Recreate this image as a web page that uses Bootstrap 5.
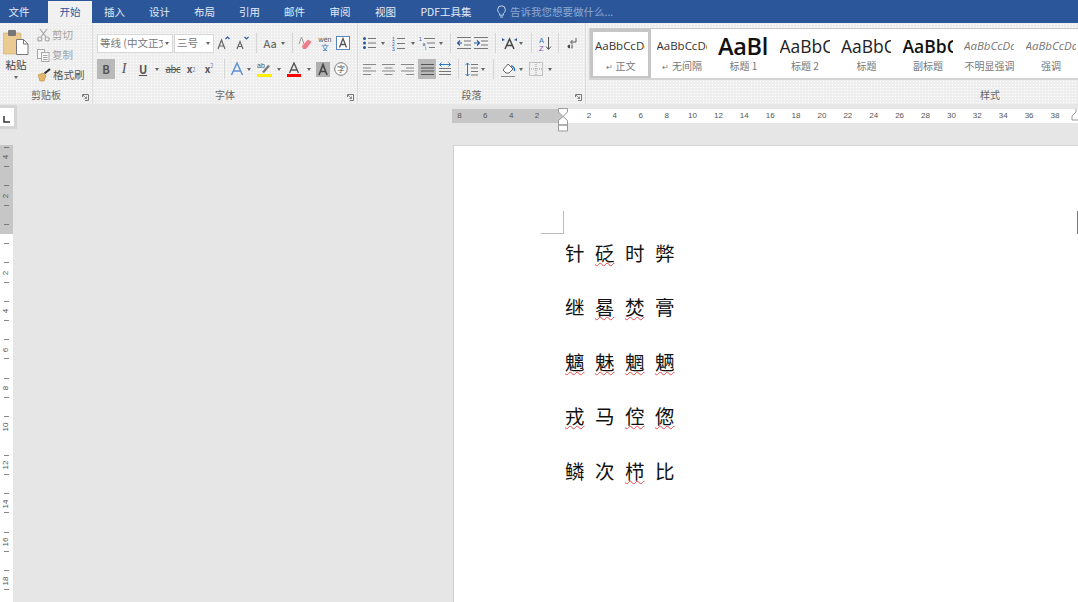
<!DOCTYPE html>
<html lang="zh-CN">
<head>
<meta charset="utf-8">
<title>Word</title>
<link rel="stylesheet" href="https://cdn.jsdelivr.net/npm/bootstrap@5.3.0/dist/css/bootstrap.min.css">
<style>
html,body{height:602px;overflow:hidden}
body{background:#e6e6e6;font-family:"Noto Sans CJK SC","Liberation Sans",sans-serif;color:#555;font-size:10px;line-height:14px}
svg{display:block;flex:none}
.tabbar{height:23px;background:#2b579a;color:#e4ebf5;font-size:10.5px;flex-wrap:nowrap}
.rtab{height:23px;display:flex;align-items:center;justify-content:center;flex:none;color:#e4ebf5;text-decoration:none}
.rtab.on{background:#f1f1f1;color:#2b579a;margin-left:10px;height:22px;margin-top:1px;width:44px}
.t38{width:38px}.t45{width:45px}.t46{width:46px}.t76{width:76px}
.tell{color:#8ea8d2;margin-left:13px;gap:4px;white-space:nowrap}
.ribbon{height:81px;background-color:#eeeeee;background-image:radial-gradient(#ffffff 0.7px,transparent 0.8px);background-size:3px 3px;color:#666;overflow:hidden}
.rgroup{height:81px;border-right:1px solid #dcdcdc;flex:none}
.gclip{width:93px}.gfont{width:265px}.gpara{width:228px}.gstyle{width:808px;border:0}
.glabel{height:15px;line-height:15px;margin-top:auto;margin-bottom:2px;text-align:center;color:#666;flex:none}
.lnch{position:absolute;right:3px;bottom:3px}
.tb{height:20px;flex:none;display:flex;align-items:center}
.tb+.tb{margin-top:6px}
.fontrows{padding:10px 0 0 4px}
.pararows{padding:10px 0 0 0}
.cl{height:20px;flex:none;display:flex;align-items:center;justify-content:center;color:#555;font-size:11px}
.w4{width:4px}.w6{width:6px}.w7{width:7px}.w8{width:8px}.w10{width:10px}.w12{width:12px}.w14{width:14px}.w16{width:16px}.w18{width:18px}.w19{width:19px}.w20{width:20px}.w22{width:22px}.w24{width:24px}.w28{width:28px}
.act{background:#b9b9b9}
.dn{width:0;height:0;border-left:2.5px solid transparent;border-right:2.5px solid transparent;border-top:3px solid #666;display:block;flex:none}
.vs{width:1px;height:20px;background:#d6d6d6;display:block}
.combo{height:19px;background:#fff;border:1px solid #d8d8d8;display:flex;align-items:center;flex:none;padding:0 3px 0 2px;color:#777;font-size:10.5px;white-space:nowrap;overflow:hidden}
.cf{width:76px;margin-right:1px}.cs{width:40px}
.combo .dn{margin-left:auto}
.fname{width:63px;overflow:hidden;display:block}
.itl{font-family:"Liberation Serif",serif;font-size:14px}
.strike{font-size:9.5px;letter-spacing:-.3px}
.xs{font-size:10px;font-weight:700}
.xs sub,.xs sup{font-size:5.5px;color:#5b86bd;font-weight:400}
.pastecol{width:32px;padding-top:7px}
.pastetx{line-height:14px;margin-top:3px;color:#444;font-size:10.5px}
.smallcol{padding-top:2px;margin-left:5px}
.sm{height:20px;display:flex;align-items:center;gap:2px;font-size:10.5px;white-space:nowrap}
.sm.off{color:#a3a3a3}
.sm.onn{color:#555}
.gallery{margin:5px 0 0 3px;height:52px;background:#fff;border-top:1px solid #c9c9c9;border-bottom:2px solid #d4d4d4;border-left:1px solid #d4d4d4}
.gitem{width:61.5px;height:50px;flex:none;padding:5px 0 0 5px;overflow:hidden;background:#fff}
.gitem.sel{box-shadow:inset 0 0 0 3px #c6c6c6;width:61px;margin-right:.5px}
.samp{height:23px;width:50px;overflow:hidden;white-space:nowrap;display:flex;align-items:center;font-family:"Open Sans","Liberation Sans",sans-serif;color:#333;font-size:11.5px}
.s-h1{font-size:23.5px;font-weight:600;color:#111;letter-spacing:-.3px}
.s-h2{font-size:17.5px;color:#222}
.s-sub{font-size:17.5px;font-weight:600;color:#111}
.s-em{font-style:italic;color:#777;font-size:11.5px}
.gname{width:51px;text-align:center;line-height:14px;margin-top:2px;color:#777;white-space:nowrap;font-size:10px}
.ret{font-size:8px;margin-right:3px;color:#777}
.work{height:498px}
.leftcol{width:452px;flex:none}
.corner{width:17px;height:24px;background:#fff;border:3px solid #d5d5d5;border-left:0;padding:8px 0 0 3px;margin-top:1px}
.vruler{width:13px;margin-top:16px;height:457px}
.vgrey{height:89px;background-color:#c6c6c6;background-image:repeating-linear-gradient(to top,transparent 0 9px,#777 9px 10px,transparent 10px 19.25px);background-size:5px 100%;background-position:4px 0;background-repeat:no-repeat;padding-bottom:19.25px}
.vwhite{height:368px;background-color:#fff;background-image:repeating-linear-gradient(to bottom,transparent 0 9px,#888 9px 10px,transparent 10px 19.25px);background-size:5px 100%;background-position:4px 0;background-repeat:no-repeat;padding-top:19.25px}
.vnum{height:38.5px;width:13px;flex:none;display:flex;align-items:center;justify-content:center;font-size:8px;color:#555;font-family:"Liberation Sans",sans-serif}
.vnum span{transform:rotate(-90deg);display:block;background:inherit}
.rightcol{min-width:0;flex:1 1 0}
.hruler{height:14px;margin-top:5px;font-family:"Liberation Sans",sans-serif;font-size:8px;line-height:14px;color:#555}
.hgrey{width:111px;background:#c6c6c6;padding-right:13px;flex:none}
.hwhite{flex:1 1 0;background:#fff;padding-left:13px;overflow:hidden}
.hnum{width:25.9px;flex:none;text-align:center}
.ind{position:absolute;left:106px;top:-1px}
.ind2{position:absolute;right:0;top:0}
.pagebox{height:460px;margin:22px 0 0 1px;background:#fff;border-left:1px solid #cfcfcf;border-top:1px solid #d6d6d6;padding:80px 0 0 111px}
.crop{position:absolute;left:87px;top:65px;width:23px;height:23px;border-right:1px solid #bbb;border-bottom:1px solid #bbb}
.crop2{position:absolute;right:0;top:65px;width:1px;height:23px;background:#777}
.hanzi{display:grid;grid-template-columns:repeat(4,30px);grid-auto-rows:54.4px;font-size:19.5px;line-height:54.4px;color:#111}
.hz{display:block;height:54.4px;text-align:left;white-space:nowrap}
.sq{text-decoration:underline wavy #e8484a 1px;text-underline-offset:1px}
</style>
</head>
<body>
<ul class="nav tabbar align-items-center">
  <li><a class="rtab t38" href="#">文件</a></li>
  <li><a class="rtab on" href="#">开始</a></li>
  <li><a class="rtab t45" href="#">插入</a></li>
  <li><a class="rtab t45" href="#">设计</a></li>
  <li><a class="rtab t45" href="#">布局</a></li>
  <li><a class="rtab t45" href="#">引用</a></li>
  <li><a class="rtab t45" href="#">邮件</a></li>
  <li><a class="rtab t46" href="#">审阅</a></li>
  <li><a class="rtab t45" href="#">视图</a></li>
  <li><a class="rtab t76" href="#">PDF工具集</a></li>
  <li class="d-flex align-items-center tell">
    <svg width="9" height="13" viewBox="0 0 9 13" fill="none" stroke="#c5d3e8"><path d="M2.6 8.5C1.5 7.5.7 6.5.7 4.6a3.8 3.8 0 0 1 7.6 0c0 1.9-.8 2.9-1.9 3.9v1.7H2.6z"/><path d="M3 12h3"/></svg>
    <span>告诉我您想要做什么...</span>
  </li>
</ul>

<div class="ribbon d-flex">
  <!-- clipboard -->
  <section class="rgroup gclip d-flex flex-column position-relative">
    <div class="d-flex">
      <div class="pastecol d-flex flex-column align-items-center">
        <svg width="26" height="25" viewBox="0 0 26 25"><rect x="0" y="3" width="18" height="21" rx="1" fill="#eccb93" stroke="#c9a76d" stroke-width=".6"/><rect x="5" y="0" width="8" height="6" rx="1" fill="#777"/><path d="M13.5 9.5h7l4.5 4.5v10.5h-11.500z" fill="#fff" stroke="#777"/><path d="M20.500 9.500v4.500h4.500" fill="none" stroke="#777"/></svg>
        <div class="pastetx">粘贴</div>
        <span class="dn mt-1"></span>
      </div>
      <div class="smallcol">
        <div class="sm off"><svg width="13" height="14" viewBox="0 0 13 14" fill="none" stroke="#a8a8a8" stroke-width="1.200"><path d="M3 1l6 8M10 1L4 9"/><circle cx="2.800" cy="11" r="2"/><circle cx="10.200" cy="11" r="2"/></svg><span>剪切</span></div>
        <div class="sm off"><svg width="13" height="14" viewBox="0 0 13 14" fill="#f6f6f6" stroke="#a8a8a8"><rect x=".5" y="1.500" width="7" height="9"/><rect x="4.500" y="4.500" width="7.500" height="9"/><path d="M6 7.500h4.500M6 9.500h4.500M6 11.500h4.500"/></svg><span>复制</span></div>
        <div class="sm onn"><svg width="14" height="14" viewBox="0 0 14 14"><path d="M1 7l5-2 3 3-2 5H3z" fill="#e2b768" stroke="#b58b3c" stroke-width=".6"/><path d="M7.500 5.500L13 1" stroke="#333" stroke-width="2.200"/></svg><span>格式刷</span></div>
      </div>
    </div>
    <div class="glabel">剪贴板</div>
    <svg class="lnch" width="7" height="7" viewBox="0 0 7 7" fill="none" stroke="#777"><path d="M.5 3V.5H6.500V6.500H3"/><path d="M1 1l3.500 3.500M2.500 4.500h2v-2" stroke-width=".8"/></svg>
  </section>

  <!-- font -->
  <section class="rgroup gfont d-flex flex-column position-relative">
    <div class="fontrows">
      <div class="tb">
        <div class="combo cf"><span class="fname">等线 (中文正文)</span><span class="dn"></span></div>
        <div class="combo cs"><span>三号</span><span class="dn"></span></div>
        <div class="cl w20"><svg width="14" height="14" viewBox="0 0 14 14" fill="none" stroke="#666" stroke-width="1.200"><path d="M1 13L4.500 4 8 13M2.200 10h4.600"/><path d="M8.500 3l2-2 2 2" stroke="#2b579a"/></svg></div>
        <div class="cl w18"><svg width="14" height="14" viewBox="0 0 14 14" fill="none" stroke="#666" stroke-width="1.200"><path d="M1 13L4 5.500 7 13M2 10.500h4"/><path d="M8.500 1l2 2 2-2" stroke="#2b579a"/></svg></div>
        <div class="cl w8"><span class="vs"></span></div>
        <div class="cl w28 gap-1"><span>Aa</span><span class="dn"></span></div>
        <div class="cl w8"><span class="vs"></span></div>
        <div class="cl w18"><svg width="14" height="14" viewBox="0 0 14 14"><path d="M1 8L3.500 1 6 8" fill="none" stroke="#999"/><path d="M4 10l6-6.500 3.500 2.500-5.500 7H5z" fill="#ef7c8a"/></svg></div>
        <div class="cl w22 flex-column"><svg width="18" height="16" viewBox="0 0 18 16"><text x="9" y="7" font-size="7" text-anchor="middle" fill="#555" font-family="Liberation Sans">wén</text><text x="9" y="15.500" font-size="8" text-anchor="middle" fill="#2b79c2" font-family="Noto Sans CJK SC">文</text></svg></div>
        <div class="cl w14"><svg width="14" height="14" viewBox="0 0 14 14"><rect x=".5" y=".5" width="13" height="13" fill="#fff" stroke="#5b86bd"/><path d="M3.500 11.500L7 2.500l3.500 9M4.800 8.500h4.400" fill="none" stroke="#555" stroke-width="1.300"/></svg></div>
      </div>
      <div class="tb">
        <div class="cl w18 act fw-bold">B</div>
        <div class="cl w18 fst-italic itl">I</div>
        <div class="cl w20"><span class="text-decoration-underline fw-semibold">U</span></div>
        <div class="cl w8"><span class="dn"></span></div>
        <div class="cl w24 strike"><span class="text-decoration-line-through">abc</span></div>
        <div class="cl w12 xs"><span>x</span><sub>2</sub></div>
        <div class="cl w24 xs"><span>x</span><sup>2</sup></div>
        <div class="cl w7"><span class="vs"></span></div>
        <div class="cl w18"><svg width="14" height="16" viewBox="0 0 14 16" fill="none" stroke="#5c8fcf" stroke-width="1.500"><path d="M1.500 14L7 2l5.500 12M3.500 10h7"/></svg></div>
        <div class="cl w6"><span class="dn"></span></div>
        <div class="cl w24"><svg width="15" height="15" viewBox="0 0 15 15"><text x="0" y="6" font-size="7" fill="#555" font-family="Liberation Sans">ab</text><path d="M5 10l6-7 2 1-6 7z" fill="#777"/><rect y="12" width="15" height="3" fill="#ffef00"/></svg></div>
        <div class="cl w6"><span class="dn"></span></div>
        <div class="cl w24"><svg width="14" height="15" viewBox="0 0 14 15"><path d="M2.500 11L7 1l4.500 10M4 8h6" fill="none" stroke="#555" stroke-width="1.400"/><rect y="12" width="14" height="3" fill="#f00"/></svg></div>
        <div class="cl w6"><span class="dn"></span></div>
        <div class="cl w22"><svg width="14" height="15" viewBox="0 0 14 15"><rect width="14" height="15" fill="#b0b0b0"/><path d="M3 13L7 2.500 11 13M4.500 9.500h5" fill="none" stroke="#444" stroke-width="1.600"/></svg></div>
        <div class="cl w14"><svg width="14" height="14" viewBox="0 0 14 14"><circle cx="7" cy="7" r="6.300" fill="#fff" stroke="#777"/><text x="7" y="10" font-size="8" text-anchor="middle" fill="#555" font-family="Noto Sans CJK SC">字</text></svg></div>
      </div>
    </div>
    <div class="glabel">字体</div>
    <svg class="lnch" width="7" height="7" viewBox="0 0 7 7" fill="none" stroke="#777"><path d="M.5 3V.5H6.500V6.500H3"/><path d="M1 1l3.500 3.500M2.500 4.500h2v-2" stroke-width=".8"/></svg>
  </section>

  <!-- paragraph -->
  <section class="rgroup gpara d-flex flex-column position-relative">
    <div class="pararows">
      <div class="tb">
        <div class="cl w22"><svg width="13" height="14" viewBox="0 0 13 14" fill="none" stroke="#777"><path d="M5 2.500h8M5 7h8M5 11.500h8"/><g fill="#2b579a" stroke="none"><circle cx="1.500" cy="2.500" r="1.500"/><circle cx="1.500" cy="7" r="1.500"/><circle cx="1.500" cy="11.500" r="1.500"/></g></svg></div>
        <div class="cl w6"><span class="dn"></span></div>
        <div class="cl w24"><svg width="13" height="15" viewBox="0 0 13 15"><path d="M5 2.500h8M5 7.500h8M5 12.500h8" stroke="#777"/><text x="0" y="5" font-size="5" fill="#2b579a" font-family="Liberation Sans">1</text><text x="0" y="10" font-size="5" fill="#2b579a" font-family="Liberation Sans">2</text><text x="0" y="15" font-size="5" fill="#2b579a" font-family="Liberation Sans">3</text></svg></div>
        <div class="cl w6"><span class="dn"></span></div>
        <div class="cl w22"><svg width="16" height="14" viewBox="0 0 16 14"><path d="M5 2.500h11M8 7h8M10 11.500h6" stroke="#777"/><text x="0" y="5" font-size="5" fill="#2b579a" font-family="Liberation Sans">1</text><text x="3.500" y="9.500" font-size="5" fill="#2b579a" font-family="Liberation Sans">a</text><text x="6" y="14" font-size="5" fill="#2b579a" font-family="Liberation Sans">i</text></svg></div>
        <div class="cl w6"><span class="dn"></span></div>
        <div class="cl w12"><span class="vs"></span></div>
        <div class="cl w16"><svg width="14" height="12" viewBox="0 0 14 12" fill="none" stroke="#777"><path d="M0 .5h14M7 4h7M7 8h7M0 11.500h14"/><path d="M5 6H.5M3 3.500L.5 6 3 8.500" stroke="#2b579a" stroke-width="1.200"/></svg></div>
        <div class="cl w18"><svg width="14" height="12" viewBox="0 0 14 12" fill="none" stroke="#777"><path d="M0 .5h14M7 4h7M7 8h7M0 11.500h14"/><path d="M0 6h5M3 3.500L5.500 6 3 8.500" stroke="#2b579a" stroke-width="1.200"/></svg></div>
        <div class="cl w10"><span class="vs"></span></div>
        <div class="cl w18"><svg width="15" height="13" viewBox="0 0 15 13"><path d="M3 12L7.500 2 12 12M4.700 8.500h5.600" fill="none" stroke="#444" stroke-width="1.500"/><path d="M0 1l3 2-3 1zM15 1l-3 2 3 1z" fill="#2b579a"/></svg></div>
        <div class="cl w6"><span class="dn"></span></div>
        <div class="cl w14"><span class="vs"></span></div>
        <div class="cl w14"><svg width="13" height="15" viewBox="0 0 13 15"><text x="0" y="6.500" font-size="7.500" fill="#2b79c2" font-family="Liberation Sans">A</text><text x="0" y="14.500" font-size="7.500" fill="#8a4fb0" font-family="Liberation Sans">Z</text><path d="M9.500 1v12M7 10.500l2.500 3 2.500-3" fill="none" stroke="#555"/></svg></div>
        <div class="cl w12"><span class="vs"></span></div>
        <div class="cl w16"><svg width="10" height="12" viewBox="0 0 10 12"><path d="M9 1v4H4M5.500 3L3.500 5l2 2" fill="none" stroke="#555"/><path d="M5 7.500v4M2.500 8a1.500 1.500 0 0 0 0 3z" stroke="#444" fill="#444"/></svg></div>
      </div>
      <div class="tb">
        <div class="cl w22"><svg width="13" height="11" viewBox="0 0 13 11" stroke="#888"><path d="M0 .5h13M0 4h8M0 7h13M0 10.500h8"/></svg></div>
        <div class="cl w16"><svg width="13" height="11" viewBox="0 0 13 11" stroke="#888"><path d="M0 .5h13M2.500 4h8M0 7h13M2.500 10.500h8"/></svg></div>
        <div class="cl w22"><svg width="13" height="11" viewBox="0 0 13 11" stroke="#888"><path d="M0 .5h13M5 4h8M0 7h13M5 10.500h8"/></svg></div>
        <div class="cl w18 act"><svg width="13" height="11" viewBox="0 0 13 11" stroke="#555"><path d="M0 .5h13M0 4h13M0 7h13M0 10.500h13"/></svg></div>
        <div class="cl w18"><svg width="14" height="14" viewBox="0 0 14 14" fill="none" stroke="#777"><path d="M1 6.500h12M1 9.500h12M1 12.500h12"/><path d="M1.500 2.500h11M3.500 .5l-2 2 2 2M10.500 .5l2 2-2 2" stroke="#2b79c2"/></svg></div>
        <div class="cl w8"><span class="vs"></span></div>
        <div class="cl w18"><svg width="13" height="15" viewBox="0 0 13 15" fill="none" stroke="#777"><path d="M6 2.500h7M6 6h7M6 9.500h7M6 13h7"/><path d="M2.500 1v13M.5 3l2-2 2 2M.5 12l2 2 2-2" stroke="#2b79c2"/></svg></div>
        <div class="cl w6"><span class="dn"></span></div>
        <div class="cl w14"><span class="vs"></span></div>
        <div class="cl w16"><svg width="15" height="15" viewBox="0 0 15 15"><path d="M2 8l5-6 5 5-4 4H5z" fill="#fff" stroke="#666"/><path d="M10 4c2 0 4 2 3.500 5" fill="none" stroke="#2b79c2" stroke-width="1.500"/><path d="M0 14.500h14" stroke="#888"/></svg></div>
        <div class="cl w10"><span class="dn"></span></div>
        <div class="cl w20"><svg width="14" height="14" viewBox="0 0 14 14" fill="none" stroke="#999" stroke-dasharray="1 1"><rect x=".5" y=".5" width="13" height="13"/><path d="M7 0v14M0 7h14"/></svg></div>
        <div class="cl w8"><span class="dn"></span></div>
      </div>
    </div>
    <div class="glabel">段落</div>
    <svg class="lnch" width="7" height="7" viewBox="0 0 7 7" fill="none" stroke="#777"><path d="M.5 3V.5H6.500V6.500H3"/><path d="M1 1l3.500 3.500M2.500 4.500h2v-2" stroke-width=".8"/></svg>
  </section>

  <!-- styles -->
  <section class="rgroup gstyle d-flex flex-column">
    <div class="gallery d-flex overflow-hidden">
      <div class="gitem sel"><div class="samp">AaBbCcDd</div><div class="gname"><span class="ret">↵</span>正文</div></div>
      <div class="gitem"><div class="samp">AaBbCcDd</div><div class="gname"><span class="ret">↵</span>无间隔</div></div>
      <div class="gitem"><div class="samp s-h1">AaBl</div><div class="gname">标题 1</div></div>
      <div class="gitem"><div class="samp s-h2">AaBbC</div><div class="gname">标题 2</div></div>
      <div class="gitem"><div class="samp s-h2">AaBbC</div><div class="gname">标题</div></div>
      <div class="gitem"><div class="samp s-sub">AaBbC</div><div class="gname">副标题</div></div>
      <div class="gitem"><div class="samp s-em">AaBbCcDd</div><div class="gname">不明显强调</div></div>
      <div class="gitem"><div class="samp s-em">AaBbCcDd</div><div class="gname">强调</div></div>
    </div>
    <div class="glabel">样式</div>
  </section>
</div>

<main class="work d-flex">
  <div class="leftcol">
    <div class="corner"><svg width="7" height="7" viewBox="0 0 7 7" fill="none" stroke="#333" stroke-width="1.500"><path d="M1 0v6h6"/></svg></div>
    <div class="vruler d-flex flex-column">
      <div class="vgrey d-flex flex-column justify-content-end">
        <div class="vnum"><span>4</span></div>
        <div class="vnum"><span>2</span></div>
      </div>
      <div class="vwhite d-flex flex-column overflow-hidden">
        <div class="vnum"><span>2</span></div><div class="vnum"><span>4</span></div><div class="vnum"><span>6</span></div><div class="vnum"><span>8</span></div><div class="vnum"><span>10</span></div><div class="vnum"><span>12</span></div><div class="vnum"><span>14</span></div><div class="vnum"><span>16</span></div><div class="vnum"><span>18</span></div>
      </div>
    </div>
  </div>
  <div class="rightcol">
    <div class="hruler d-flex position-relative">
      <div class="hgrey d-flex justify-content-end">
        <span class="hnum">8</span><span class="hnum">6</span><span class="hnum">4</span><span class="hnum">2</span>
      </div>
      <div class="hwhite d-flex">
        <span class="hnum">2</span><span class="hnum">4</span><span class="hnum">6</span><span class="hnum">8</span><span class="hnum">10</span><span class="hnum">12</span><span class="hnum">14</span><span class="hnum">16</span><span class="hnum">18</span><span class="hnum">20</span><span class="hnum">22</span><span class="hnum">24</span><span class="hnum">26</span><span class="hnum">28</span><span class="hnum">30</span><span class="hnum">32</span><span class="hnum">34</span><span class="hnum">36</span><span class="hnum">38</span>
      </div>
      <svg class="ind" width="10" height="24" viewBox="0 0 10 24" fill="#fff" stroke="#999"><path d="M.5.5h9V4L5 8.500.5 4zM.5 17V12.500L5 8.500l4.500 4V17zM.5 17h9v6h-9z"/></svg>
      <svg class="ind2" width="7" height="12" viewBox="0 0 7 12" fill="#fff" stroke="#999"><path d="M5 0v3L1 7v4h6"/></svg>
    </div>
    <div class="pagebox position-relative">
      <span class="crop"></span>
      <span class="crop2"></span>
      <div class="hanzi">
        <span class="hz">针</span><span class="hz"><span class="sq">砭</span></span><span class="hz">时</span><span class="hz">弊</span>
        <span class="hz">继</span><span class="hz"><span class="sq">晷</span></span><span class="hz"><span class="sq">焚</span></span><span class="hz">膏</span>
        <span class="hz"><span class="sq">魑</span></span><span class="hz"><span class="sq">魅</span></span><span class="hz"><span class="sq">魍</span></span><span class="hz"><span class="sq">魉</span></span>
        <span class="hz"><span class="sq">戎</span></span><span class="hz">马</span><span class="hz"><span class="sq">倥</span></span><span class="hz"><span class="sq">偬</span></span>
        <span class="hz">鳞</span><span class="hz">次</span><span class="hz"><span class="sq">栉</span></span><span class="hz">比</span>
      </div>
    </div>
  </div>
</main>
<script src="https://cdn.jsdelivr.net/npm/bootstrap@5.3.0/dist/js/bootstrap.bundle.min.js"></script>
</body>
</html>
